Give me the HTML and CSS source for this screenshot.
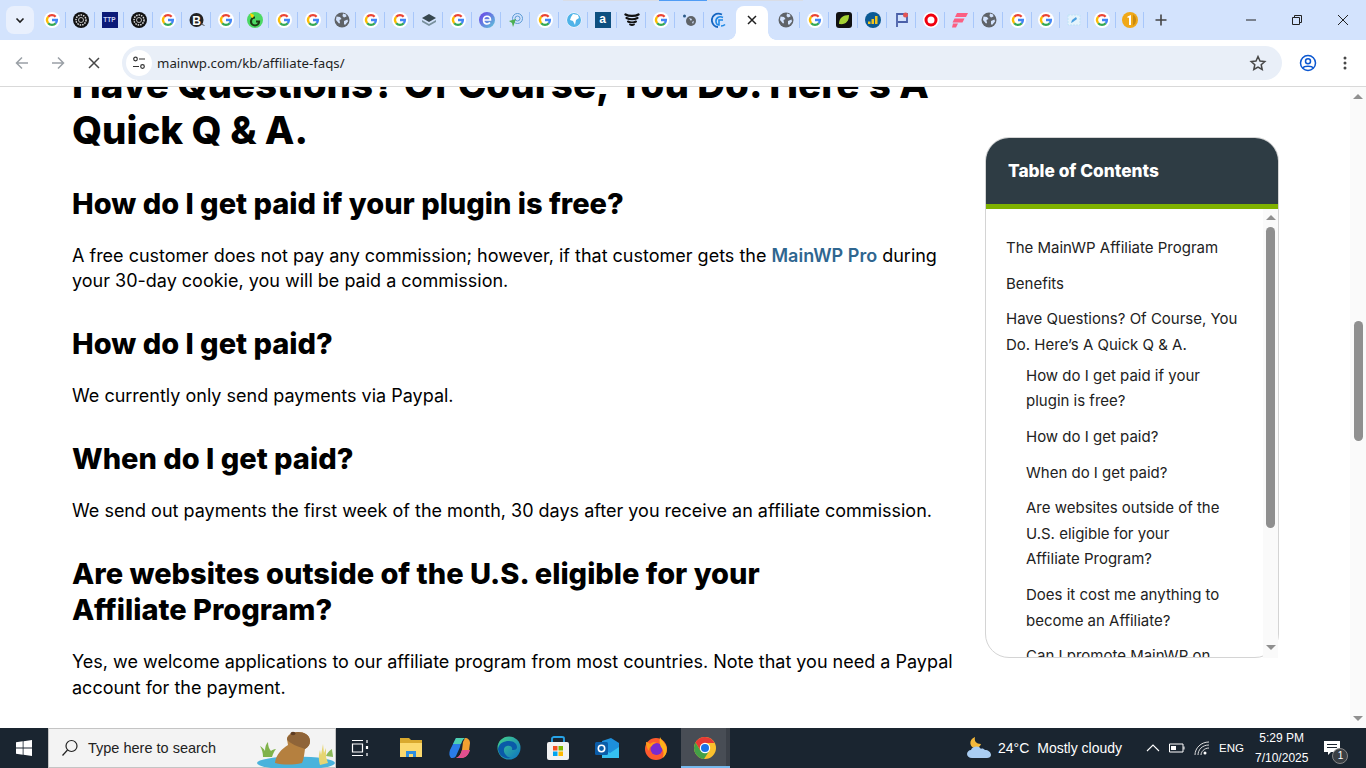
FILE: index.html
```html
<!DOCTYPE html>
<html lang="en">
<head>
  <meta charset="UTF-8">
  <title>Affiliate FAQs - MainWP</title>
  <link rel="stylesheet" href="styles.css">
</head>
<body>
  <svg class="defs" width="0" height="0">
    <symbol id="g" viewBox="0 0 16 16">
      <circle cx="8" cy="8" r="8" fill="#fff"/>
      <g fill="none" stroke-width="2.300">
        <path d="M4.250 4.850A4.900 4.900 0 0 1 11.640 4.720" stroke="#ea4335"/>
        <path d="M4.250 4.850A4.900 4.900 0 0 0 4.250 11.150" stroke="#fbbc05"/>
        <path d="M4.250 11.150A4.900 4.900 0 0 0 11.750 11.150" stroke="#34a853"/>
        <path d="M11.750 11.150A4.900 4.900 0 0 0 12.900 8H8" stroke="#4285f4"/>
      </g>
    </symbol>
    <symbol id="globe" viewBox="0 0 16 16">
      <circle cx="8" cy="8" r="7.500" fill="#5f6368"/>
      <path d="M2.500 4.500 6 5l1.500 2-2 1 .5 3-1 .5L2 8zM9 1.500l3 1 .5 2-2.500 1-1.500-1.500zM10 9l3.500-1.500.5 2-3 3.500-1-1z" fill="#d3e3fd"/>
    </symbol>
    <symbol id="swirl" viewBox="0 0 16 16">
      <circle cx="8" cy="8" r="8" fill="#111"/>
      <circle cx="8" cy="8" r="5" fill="none" stroke="#ddd" stroke-width="1.500" stroke-dasharray="1.500 1"/>
      <circle cx="8" cy="8" r="2.500" fill="none" stroke="#bbb" stroke-width="1"/>
    </symbol>
  </svg>

  <div class="tabstrip">
    <span class="tab-line"><span class="tab-line-on"></span></span>
    <button class="tab-search"><svg width="12" height="12" viewBox="0 0 12 12"><path d="M2.500 4.500 6 8l3.500-3.500" fill="none" stroke="#1f1f1f" stroke-width="1.600"/></svg></button>
    <div class="tabs">
      <span class="tab"><svg class="fav"><use href="#g"/></svg></span>
      <span class="tab"><svg class="fav"><use href="#swirl"/></svg></span>
      <span class="tab"><span class="fav ttp">TTP</span></span>
      <span class="tab"><svg class="fav"><use href="#swirl"/></svg></span>
      <span class="tab"><svg class="fav"><use href="#g"/></svg></span>
      <span class="tab"><svg class="fav" viewBox="0 0 16 16"><circle cx="7.500" cy="8" r="7" fill="#222"/><text x="7.500" y="12.500" text-anchor="middle" class="fav-b">B</text><path d="M12 12l3.500 1.500" stroke="#555"/></svg></span>
      <span class="tab"><svg class="fav"><use href="#g"/></svg></span>
      <span class="tab"><svg class="fav" viewBox="0 0 16 16"><circle cx="8" cy="8" r="8" fill="#4cd964"/><path d="M8 5.500a4 4 0 1 0 4 4H9" fill="none" stroke="#1c3b12" stroke-width="2.200"/><path d="M3 1l4 2-1 3-2-1z" fill="#ffd600"/></svg></span>
      <span class="tab"><svg class="fav"><use href="#g"/></svg></span>
      <span class="tab"><svg class="fav"><use href="#g"/></svg></span>
      <span class="tab"><svg class="fav"><use href="#globe"/></svg></span>
      <span class="tab"><svg class="fav"><use href="#g"/></svg></span>
      <span class="tab"><svg class="fav"><use href="#g"/></svg></span>
      <span class="tab"><svg class="fav" viewBox="0 0 16 16"><path d="M8 2l7 4-7 4-7-4z" fill="#37474f"/><path d="M1 8l7 4 7-4v2l-7 4-7-4z" fill="#78909c"/></svg></span>
      <span class="tab"><svg class="fav"><use href="#g"/></svg></span>
      <span class="tab"><svg class="fav" viewBox="0 0 16 16"><defs><linearGradient id="eg" x1="0" y1="0" x2="1" y2="1"><stop offset="0" stop-color="#6a3de8"/><stop offset="1" stop-color="#5ec8d8"/></linearGradient></defs><circle cx="8" cy="8" r="8" fill="url(#eg)"/><path d="M4.500 8h7c0-5-7-5-7 0s5 4.500 6.500 2.500" fill="none" stroke="#fff" stroke-width="1.600"/></svg></span>
      <span class="tab"><svg class="fav" viewBox="0 0 16 16"><circle cx="9.500" cy="6.500" r="5" fill="none" stroke="#5b9bd5" stroke-width="1"/><circle cx="9.500" cy="6.500" r="2.500" fill="none" stroke="#5b9bd5"/><path d="M1 9l7-2-3 8-1-4z" fill="#4caf50"/></svg></span>
      <span class="tab"><svg class="fav"><use href="#g"/></svg></span>
      <span class="tab"><svg class="fav" viewBox="0 0 16 16"><circle cx="8" cy="8" r="7.500" fill="#fff"/><circle cx="8" cy="8" r="7" fill="#4fb3e8"/><path d="M7 2l5 1 1 3-3 2-1 5-2-4-3-1 1-3z" fill="#fff"/></svg></span>
      <span class="tab"><span class="fav alexa">a</span></span>
      <span class="tab"><svg class="fav" viewBox="0 0 16 16"><g fill="none" stroke="#111" stroke-linecap="round"><path d="M1.500 2.500c3 1.800 10 1.800 13 0" stroke-width="2.400"/><path d="M2.500 6c3 1.500 8 1.500 11 0" stroke-width="2.200"/><path d="M4 9.500c2 1 6 1 8 0" stroke-width="2"/><path d="M6 12.500c1 .5 3 .5 4 0" stroke-width="1.800"/></g></svg></span>
      <span class="tab"><svg class="fav"><use href="#g"/></svg></span>
      <span class="tab"><svg class="fav" viewBox="0 0 16 16"><circle cx="9" cy="9" r="5" fill="#5f6368"/><path d="M7 6l3 1-1 2zM10 10l2-1-1 3z" fill="#d3e3fd"/><circle cx="2.500" cy="4" r="1.500" fill="#2b5a8a"/></svg></span>
      <span class="tab no-sep"><svg class="fav" viewBox="0 0 16 16"><path d="M11 2.500C5 0 0 4 1 9.500c.6 3 3 5.500 6 5.500" fill="none" stroke="#1565c0" stroke-width="1.800"/><path d="M12 5.500C8 3.500 4.500 6 5 10c.3 2 2 3 3 3V8h4M10 14c2 0 3-.5 4-1.500" fill="none" stroke="#1e88e5" stroke-width="1.600"/></svg></span>
      <span class="tab-active"><svg width="10" height="10" viewBox="0 0 10 10"><path d="M1 1l8 8M9 1l-8 8" stroke="#1f1f1f" stroke-width="1.500"/></svg></span>
      <span class="tab"><svg class="fav"><use href="#globe"/></svg></span>
      <span class="tab"><svg class="fav"><use href="#g"/></svg></span>
      <span class="tab"><svg class="fav" viewBox="0 0 16 16"><rect width="16" height="16" rx="3" fill="#111"/><path d="M3 12c0-6 4-9 10-9 0 6-3 10-10 9z" fill="#a4d233"/></svg></span>
      <span class="tab"><svg class="fav" viewBox="0 0 16 16"><circle cx="8" cy="8" r="8" fill="#0b5a94"/><path d="M3 12h2.500V9.500H3zM6.500 12H9V7H6.500zM10 12h2.500V4H10z" fill="#f2c51d"/></svg></span>
      <span class="tab"><svg class="fav" viewBox="0 0 16 16"><path d="M3 15V2h10v8H4" fill="none" stroke="#4a5fa8" stroke-width="1.800"/><circle cx="11.500" cy="3" r="2.500" fill="#e25555"/></svg></span>
      <span class="tab"><svg class="fav" viewBox="0 0 16 16"><circle cx="8" cy="8" r="8" fill="#fff"/><circle cx="8" cy="8" r="5" fill="none" stroke="#f0000f" stroke-width="3"/></svg></span>
      <span class="tab"><svg class="fav" viewBox="0 0 16 16"><path d="M5 1h11l-2 4H3zM2.500 6.500h10l-2 4H.5zM1 11.500h5L4 15.500H0z" fill="#fb5f82"/></svg></span>
      <span class="tab"><svg class="fav"><use href="#globe"/></svg></span>
      <span class="tab"><svg class="fav"><use href="#g"/></svg></span>
      <span class="tab narrow"><svg class="fav"><use href="#g"/></svg></span>
      <span class="tab narrow"><svg class="fav" viewBox="0 0 16 16"><path d="M2 3h12v10H2z" fill="#e4f3fc" stroke="#bfe3f7" stroke-dasharray="2 1"/><path d="M5 11l1-3 4-3 1 2-4 3z" fill="#4a9fe0"/></svg></span>
      <span class="tab narrow"><svg class="fav"><use href="#g"/></svg></span>
      <span class="tab narrow"><svg class="fav" viewBox="0 0 16 16"><circle cx="8" cy="8" r="8" fill="#f0a818"/><path d="M11 2.500a6.500 6.500 0 0 1 0 11z" fill="#c98a10"/><path d="M5.500 4.500 9 3v10H7V5.500l-1.500.5z" fill="#fff"/></svg></span>
    </div>
    <svg class="new-tab" width="14" height="14" viewBox="0 0 14 14"><path d="M7 1.500v11M1.500 7h11" stroke="#444" stroke-width="1.600"/></svg>
    <div class="win-btns">
      <svg width="12" height="12" viewBox="0 0 12 12"><path d="M1 6h10" stroke="#222"/></svg>
      <svg width="12" height="12" viewBox="0 0 12 12"><path d="M1.500 3.500h7v7h-7zM3.500 3.500v-2h7v7h-2" fill="none" stroke="#222"/></svg>
      <svg width="12" height="12" viewBox="0 0 12 12"><path d="M1 1l10 10M11 1L1 11" stroke="#222"/></svg>
    </div>
  </div>

  <div class="toolbar">
    <svg class="nav" width="16" height="16" viewBox="0 0 16 16"><path d="M14 8H2.500M8 2.500 2.500 8 8 13.500" fill="none" stroke="#9aa0a6" stroke-width="1.500"/></svg>
    <svg class="nav" width="16" height="16" viewBox="0 0 16 16"><path d="M2 8h11.500M8 2.500 13.500 8 8 13.500" fill="none" stroke="#9aa0a6" stroke-width="1.500"/></svg>
    <svg class="nav" width="16" height="16" viewBox="0 0 16 16"><path d="M3 3l10 10M13 3 3 13" fill="none" stroke="#474747" stroke-width="1.500"/></svg>
    <div class="omnibox">
      <span class="site-info"><svg width="14" height="14" viewBox="0 0 14 14"><g fill="none" stroke="#333" stroke-width="1.200"><circle cx="3.500" cy="3" r="1.800"/><path d="M7 3h6M1 10.500h6"/><circle cx="10.500" cy="10.500" r="1.800"/></g></svg></span>
      <span class="url">mainwp.com/kb/affiliate-faqs/</span>
      <svg class="star" width="18" height="18" viewBox="0 0 18 18"><path d="M9 2.500l2 4.500 4.800.5-3.600 3.200 1 4.800L9 13l-4.200 2.500 1-4.800L2.200 7.500 7 7z" fill="none" stroke="#474747" stroke-width="1.500"/></svg>
    </div>
    <svg class="avatar" width="18" height="18" viewBox="0 0 18 18"><g fill="none" stroke="#0b57d0" stroke-width="1.500"><circle cx="9" cy="9" r="7.500"/><circle cx="9" cy="7.200" r="2.500"/><path d="M4 14c1-2.500 9-2.500 10 0"/></g></svg>
    <svg class="menu" width="4" height="14" viewBox="0 0 4 14"><g fill="#474747"><circle cx="2" cy="2" r="1.500"/><circle cx="2" cy="7" r="1.500"/><circle cx="2" cy="12" r="1.500"/></g></svg>
  </div>

  <div class="viewport">
    <main class="page">
      <article class="faq">
        <h1>Have Questions? Of Course, You Do. Here’s A Quick Q &amp; A.</h1>
        <h2>How do I get paid if your plugin is free?</h2>
        <p>A free customer does not pay any commission; however, if that customer gets the <a href="#">MainWP Pro</a> during your 30-day cookie, you will be paid a commission.</p>
        <h2>How do I get paid?</h2>
        <p>We currently only send payments via Paypal.</p>
        <h2>When do I get paid?</h2>
        <p>We send out payments the first week of the month, 30 days after you receive an affiliate commission.</p>
        <h2>Are websites outside of the U.S. eligible for your Affiliate&nbsp;Program?</h2>
        <p>Yes, we welcome applications to our affiliate program from most countries. Note that you need a Paypal account for the payment.</p>
      </article>
      <aside class="toc">
        <div class="toc-head">Table of Contents</div>
        <div class="toc-body">
          <ul class="toc-list">
            <li>The MainWP Affiliate Program</li>
            <li>Benefits</li>
            <li>Have Questions? Of Course, You Do. Here’s A Quick Q &amp; A.
              <ul class="toc-sub">
                <li>How do I get paid if your plugin is free?</li>
                <li>How do I get paid?</li>
                <li>When do I get paid?</li>
                <li>Are websites outside of the U.S. eligible for your Affiliate&nbsp;Program?</li>
                <li>Does it cost me anything to become an Affiliate?</li>
                <li>Can I promote MainWP on</li>
              </ul>
            </li>
          </ul>
        </div>
        <div class="toc-scroll">
          <span class="arrow-up"></span>
          <span class="toc-thumb"></span>
          <span class="arrow-down"></span>
        </div>
      </aside>
    </main>
    <div class="page-scroll">
      <span class="arrow-up"></span>
      <span class="page-thumb"></span>
      <span class="arrow-down"></span>
    </div>
  </div>

  <footer class="taskbar">
    <svg class="start" width="16" height="16" viewBox="0 0 16 16"><path d="M0 2.300 6.700 1.300v6.300H0zM7.500 1.200 16 0v7.600H7.500zM0 8.400h6.700v6.300L0 13.700zM7.500 8.400H16V16l-8.500-1.200z" fill="#fff"/></svg>
    <div class="search">
      <svg width="18" height="18" viewBox="0 0 18 18"><g fill="none" stroke="#222" stroke-width="1.200"><circle cx="10.500" cy="7" r="5.500"/><path d="M6.500 11 1.500 16.500"/></g></svg>
      <span class="search-text">Type here to search</span>
      <svg class="capybara" width="80" height="40" viewBox="0 0 80 40">
        <ellipse cx="40" cy="35" rx="39" ry="6.500" fill="#49b3dc"/>
        <path d="M7 29c0-4-1-8-3-11 2 1 4 3 5 5 0-4 1-7 3-9 0 4 1 7 3 9 1-1 3-2 5-2-2 2-3 5-4 8z" fill="#7fb24a"/>
        <path d="M19 35c1-9 7-14 13-18l-1-6c0-4 5-7 11-7 6 0 12 3 12 9 0 4-2 6-5 8-1 6-1 10-3 14-9 2-19 2-27 0z" fill="#b5803f"/>
        <path d="M42 4c6 0 12 3 12 9 0 4-2 6-5 8-4-2-10-3-14-6-3-2-4-3-4-4 1-4 6-7 11-7z" fill="#8f6438"/>
        <ellipse cx="37" cy="5.500" rx="2.500" ry="1.800" fill="#5e3c22"/>
        <path d="M64 37c-2-6-1-11 0-15l1 5 2-11 1 9 2-5 0 9 2 6z" fill="#e6d572"/>
        <path d="M70 28c1-3 3-5 6-7 0 3 1 5 1 8z" fill="#8cb95a"/>
      </svg>
    </div>
    <svg class="task-view" width="20" height="18" viewBox="0 0 20 18"><g fill="none" stroke="#fff" stroke-width="1.200"><path d="M2 1.500h11M2 16.500h11M2.500 5h10v8h-10zM17 1v3M17 14v3"/><path d="M17 7v3" stroke-width="2.200"/></g></svg>
    <span class="app"><svg width="24" height="22" viewBox="0 0 24 22"><path d="M1 1h9l2 2h11v17H1z" fill="#d9a92e"/><path d="M1 6h22v14H1z" fill="#fbd96e"/><path d="M7 20v-6h10v6h-3v-3h-4v3z" fill="#2f8fe0"/></svg></span>
    <span class="app"><svg width="24" height="24" viewBox="0 0 24 24"><path d="M8 2h9c-3 1-4 5-5 9l-4 9c-1 2-3 2-5 2-2-2-2-5-1-8z" fill="#2a7de8"/><path d="M17 2c3 0 5 2 5 5l-1 8c-1 4-3 6-7 7H8c3-1 5-4 6-8l1-8z" fill="#f0a030"/><path d="M8 2h9c-2 1-3 3-4 6H5z" fill="#4ed0b0"/><path d="M14 14h8c-1 4-4 8-8 8H8c3-1 5-4 6-8z" fill="#e14f8f"/></svg></span>
    <span class="app"><svg width="24" height="24" viewBox="0 0 24 24"><defs><linearGradient id="ed" x1="0" y1="0" x2="1" y2="1"><stop offset="0" stop-color="#45d48a"/><stop offset="1" stop-color="#0b70c4"/></linearGradient></defs><circle cx="12" cy="12" r="11.500" fill="url(#ed)"/><path d="M1 13C2 7 7 5 12 5c5 0 8 3 8 6 0 3-3 3-5 3 1-3-2-5-5-4-4 1-4 6-1 9 1 2 4 3 6 2.500C8 24 2 20 1 13z" fill="#0a5aa8"/></svg></span>
    <span class="app"><svg width="24" height="26" viewBox="0 0 24 26"><path d="M6 8V3.500c0-1 1-1.500 2-1.500h8c1 0 2 .5 2 1.500V8" fill="none" stroke="#27a4e8" stroke-width="1.800"/><rect x="1" y="7" width="22" height="18" rx="2" fill="#f2f2f2"/><path d="M7 11h4.500v4.500H7z" fill="#f25022"/><path d="M12.500 11H17v4.500h-4.500z" fill="#7fba00"/><path d="M7 16.500h4.500V21H7z" fill="#00a4ef"/><path d="M12.500 16.500H17V21h-4.500z" fill="#ffb900"/></svg></span>
    <span class="app"><svg width="24" height="24" viewBox="0 0 24 24"><path d="M7 5l9-3 8 5v15H7z" fill="#1d8fdc"/><path d="M7 13l8 4 9-6v11H7z" fill="#35c0f0"/><rect x="0" y="6" width="13" height="13" rx="1.500" fill="#0a5ca8"/><circle cx="6.500" cy="12.500" r="3.200" fill="none" stroke="#fff" stroke-width="1.600"/></svg></span>
    <span class="app"><svg width="24" height="24" viewBox="0 0 24 24"><circle cx="12" cy="13" r="11" fill="#ff5a2e"/><circle cx="12.500" cy="13" r="6" fill="#7a2bd0"/><path d="M16 1c1 3 5 5 6.500 10 1 5-1 9-4 11 2-4 1-8-1.500-11-1-2-2-5-1-10z" fill="#ffb11a"/><path d="M2 6c2 0 3 1 4 2 2-2 5-2 7-1-3 0-5 2-5 3-2 1-3 2-3 5-2-2-3-6-3-9z" fill="#ff9a1a"/></svg></span>
    <span class="app app-active"><svg width="24" height="24" viewBox="0 0 24 24"><circle cx="12" cy="12" r="11" fill="#fbc02d"/><path d="M12 1a11 11 0 0 0-9.500 5.500L7 14l5-7h9.500A11 11 0 0 0 12 1z" fill="#e53935"/><path d="M2.500 6.500A11 11 0 0 0 11 23l4.500-7L7 14z" fill="#43a047"/><circle cx="12" cy="12" r="5.200" fill="#fff"/><circle cx="12" cy="12" r="4" fill="#1a73e8"/></svg></span>
    <div class="tray">
      <svg class="weather" width="26" height="24" viewBox="0 0 26 24"><path d="M9 1c-1 4 1 7 6 7-1 3-4 5-7 4-4-1-6-8 1-11z" fill="#f5b93a"/><path d="M6 22c-3 0-5-2-5-4s2-4 4-4c1-4 8-5 10-1 1-1 3 0 4 1 3 0 6 2 6 5 0 2-2 3-4 3z" fill="#a9cdf2"/></svg>
      <span class="temp">24°C</span>
      <span class="cond">Mostly cloudy</span>
      <svg class="chev" width="14" height="8" viewBox="0 0 14 8"><path d="M1 7l6-6 6 6" fill="none" stroke="#fff" stroke-width="1.100"/></svg>
      <svg class="batt" width="16" height="10" viewBox="0 0 16 10"><path d="M.5 1h13.500v8H.5z" fill="none" stroke="#fff"/><path d="M2 3h5v4H2z" fill="#fff"/><path d="M14.500 3.500h1v3h-1z" fill="#fff"/></svg>
      <svg class="wifi" width="16" height="16" viewBox="0 0 16 16"><g fill="none" stroke="#ddd"><path d="M1 15C1 8 7 2 15 2M4 15c0-5 4-10 11-10M7 15c0-3 3-7 8-7"/></g><circle cx="11" cy="13" r="1.500" fill="#fff"/></svg>
      <span class="lang">ENG</span>
      <span class="clock">5:29 PM<br>7/10/2025</span>
      <span class="notif">
        <svg width="16" height="14" viewBox="0 0 16 14"><path d="M0 0h16v11H7l-3 3v-3H0z" fill="#fff"/><path d="M3 3.500h10M3 6.500h10" stroke="#1b2530"/></svg>
        <span class="notif-count">1</span>
      </span>
    </div>
  </footer>
</body>
</html>
```

FILE: styles.css
```css
* {
  margin: 0;
  padding: 0;
  box-sizing: border-box;
}
html, body {
  height: 768px;
  overflow: hidden;
}
body {
  display: flex;
  flex-direction: column;
  background: #fff;
  font-family: Inter, "Liberation Sans", sans-serif;
  color: #000;
}
.defs {
  position: absolute;
}

/* tab strip */
.tabstrip {
  display: flex;
  align-items: flex-start;
  height: 40px;
  background: #d3e3fd;
  position: relative;
}
.tab-line {
  position: absolute;
  left: 563px;
  top: 0;
  width: 240px;
  height: 1px;
  background: #d9dde6;
}
.tab-line-on {
  display: block;
  width: 48px;
  height: 1px;
  margin-left: 96px;
  background: #4f9cf5;
}
.tab-search {
  display: flex;
  align-items: center;
  justify-content: center;
  width: 28px;
  height: 28px;
  margin: 6px 0 0 6px;
  border: none;
  border-radius: 8px;
  background: #e9f0fd;
}
.tabs {
  display: flex;
  margin: 6px 0 0 3px;
}
.tab {
  display: flex;
  align-items: center;
  justify-content: center;
  width: 29px;
  height: 28px;
  position: relative;
}
.tab.narrow {
  width: 28px;
}
.tab::after {
  content: "";
  position: absolute;
  right: 0;
  top: 6px;
  height: 16px;
  width: 1px;
  background: #a8c7fa;
}
.tab.no-sep::after {
  display: none;
}
.fav {
  display: block;
  width: 16px;
  height: 16px;
}
.fav-b {
  font: bold 12px "Liberation Sans", sans-serif;
  fill: #fff;
}
.ttp {
  background: #0b1a78;
  color: #cfd6f5;
  font: bold 6.500px/16px "Liberation Sans", sans-serif;
  text-align: center;
}
.alexa {
  background: #0d4f80;
  color: #fff;
  font: bold 12px/15px "Liberation Sans", sans-serif;
  text-align: center;
}
.tab-active {
  display: flex;
  align-items: flex-start;
  justify-content: center;
  position: relative;
  width: 32px;
  height: 34px;
  padding-top: 9px;
  margin: 0 3px 0 3px;
  background: #fff;
  border-radius: 8px 8px 0 0;
}
.tab-active::before, .tab-active::after {
  content: "";
  position: absolute;
  bottom: 0;
  width: 8px;
  height: 8px;
}
.tab-active::before {
  left: -8px;
  background: radial-gradient(circle at 0 0, transparent 7.500px, #fff 8px);
}
.tab-active::after {
  right: -8px;
  background: radial-gradient(circle at 100% 0, transparent 7.500px, #fff 8px);
}
.new-tab {
  margin: 13px 0 0 10px;
}
.win-btns {
  display: flex;
  gap: 34px;
  margin: 14px 0 0 auto;
  padding-right: 17px;
}

/* toolbar */
.toolbar {
  display: flex;
  align-items: center;
  height: 47px;
  background: #fff;
  border-radius: 8px 8px 0 0;
  border-bottom: 1px solid #d9d9d9;
  padding: 0 0 1px 14px;
}
.nav {
  margin-right: 20px;
  flex-shrink: 0;
}
.omnibox {
  display: flex;
  align-items: center;
  flex: 1;
  height: 34px;
  background: #e9eff8;
  border-radius: 17px;
  padding: 0 15px 0 4px;
}
.site-info {
  display: flex;
  align-items: center;
  justify-content: center;
  width: 26px;
  height: 26px;
  background: #fff;
  border-radius: 50%;
}
.url {
  margin-left: 5px;
  font-family: "Noto Sans", sans-serif;
  font-size: 13.250px;
  color: #1f1f1f;
}
.star {
  margin-left: auto;
}
.avatar {
  margin: 0 26px 0 17px;
}
.menu {
  margin-right: 19px;
}

/* page */
.viewport {
  display: flex;
  height: 641px;
  overflow: hidden;
}
.page {
  display: flex;
  flex: 1;
  align-items: flex-start;
  padding-left: 72px;
}
.faq {
  width: 885px;
  margin-top: -26px;
}
.faq h1 {
  font-size: 38.500px;
  line-height: 46px;
  font-weight: 800;
  margin-bottom: 32.500px;
}
.faq h2 {
  font-size: 29px;
  line-height: 36px;
  font-weight: 800;
  margin: 0 0 21.400px;
}
.faq p {
  font-size: 18px;
  line-height: 25.600px;
  margin-bottom: 32px;
}
.faq a {
  color: #2f6690;
  font-weight: 600;
  text-decoration: none;
}
.toc {
  position: relative;
  width: 294px;
  height: 521px;
  margin: 50px 0 0 28px;
  border: 1px solid #d4d4d4;
  border-radius: 24px;
  flex-shrink: 0;
}
.toc-head {
  height: 71px;
  padding: 20px 22px 0;
  background: #2e3c44;
  border-bottom: 5px solid #7fb100;
  border-radius: 23px 23px 0 0;
  color: #fff;
  font-size: 17.300px;
  line-height: 26px;
  font-weight: 800;
}
.toc-body {
  height: 448px;
  overflow: hidden;
  padding: 26px 36px 0 20px;
  border-radius: 0 0 0 23px;
  font-size: 15px;
  line-height: 25.500px;
  color: #222;
}
.toc-list, .toc-sub {
  list-style: none;
}
.toc-list li {
  margin-bottom: 10.200px;
}
.toc-sub {
  padding-left: 20px;
  margin-top: 5.500px;
}
.toc-scroll {
  position: absolute;
  top: 71px;
  right: 0;
  bottom: -1px;
  width: 15px;
  background: #fafafa;
  display: flex;
  flex-direction: column;
  align-items: center;
}
.toc-scroll .arrow-up {
  margin-top: 6px;
}
.toc-thumb {
  width: 9px;
  height: 301px;
  margin-top: 7px;
  background: #8f8f8f;
  border-radius: 4.500px;
}
.toc-scroll .arrow-down {
  margin-top: auto;
  margin-bottom: 8px;
}
.arrow-up, .arrow-down {
  width: 0;
  height: 0;
  border-left: 5px solid transparent;
  border-right: 5px solid transparent;
}
.arrow-up {
  border-bottom: 5px solid #8f8f8f;
}
.arrow-down {
  border-top: 5px solid #8f8f8f;
}
.page-scroll {
  display: flex;
  flex-direction: column;
  align-items: center;
  width: 16px;
  background: #fafafa;
}
.page-scroll .arrow-up {
  margin-top: 7px;
}
.page-thumb {
  width: 9px;
  height: 120px;
  margin-top: 222px;
  background: #8f8f8f;
  border-radius: 4.500px;
}
.page-scroll .arrow-down {
  margin-top: auto;
  margin-bottom: 7px;
}

/* taskbar */
.taskbar {
  display: flex;
  align-items: center;
  height: 40px;
  background: #1a2530;
  color: #fff;
}
.start {
  margin: 0 16px;
}
.search {
  display: flex;
  align-items: center;
  width: 288px;
  height: 40px;
  background: #f3f3f3;
  border: 1px solid #c4c4c4;
  padding-left: 12px;
  position: relative;
  color: #222;
  font-family: "Liberation Sans", sans-serif;
  font-size: 14.500px;
}
.search-text {
  margin-left: 9px;
}
.capybara {
  position: absolute;
  right: -1px;
  bottom: -1px;
}
.task-view {
  margin: 0 16.500px 0 14px;
}
.app {
  display: flex;
  align-items: center;
  justify-content: center;
  width: 49px;
  height: 40px;
}
.app-active {
  background: #484d55;
  box-shadow: inset 0 -2px 0 #76b9ed, inset -4px 0 0 #3b4048;
}
.tray {
  display: flex;
  align-items: center;
  flex: 1;
  padding-left: 236.500px;
  font-family: "Liberation Sans", sans-serif;
  font-size: 14px;
}
.temp {
  margin-left: 6px;
}
.cond {
  margin-left: 8px;
}
.chev {
  margin-left: 24px;
}
.batt {
  margin-left: 9px;
}
.wifi {
  margin-left: 9px;
}
.lang {
  margin-left: 9px;
  font-size: 11.500px;
}
.clock {
  margin-left: 11px;
  font-size: 12px;
  line-height: 20px;
  text-align: center;
}
.notif {
  position: relative;
  margin-left: 16px;
  display: flex;
}
.notif-count {
  position: absolute;
  right: -8px;
  bottom: -9px;
  width: 16px;
  height: 16px;
  border-radius: 50%;
  background: #3a3f44;
  border: 1px solid #888;
  font-size: 10px;
  line-height: 14px;
  text-align: center;
}
```
